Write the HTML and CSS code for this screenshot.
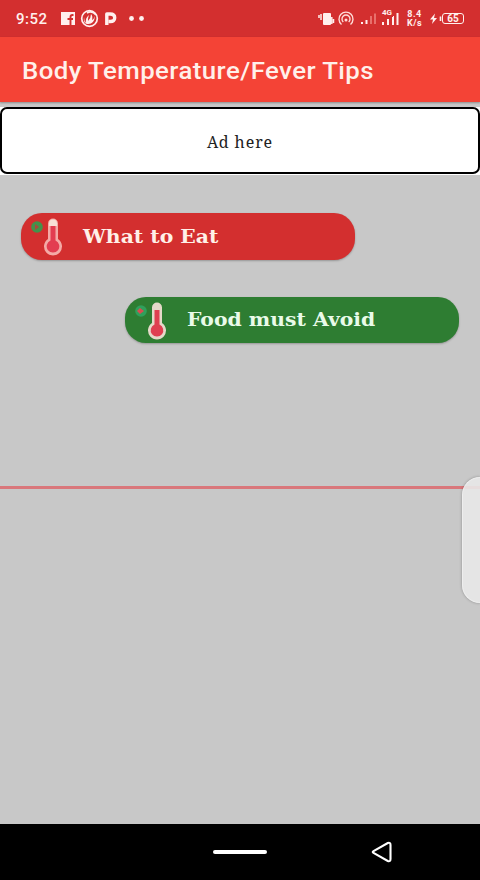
FILE: index.html
```html
<!DOCTYPE html>
<html lang="en">
<head>
    <meta charset="UTF-8">
    <meta name="viewport" content="width=device-width, initial-scale=1.0">
    <title>Body Temperature/Fever Tips</title>
    <link rel="stylesheet" href="styles.css">
</head>
<body>

    <div class="status-bar">
        <span class="clock">9:52</span>
        <svg class="notifications" width="90" height="20" viewBox="0 0 90 20">
            <rect x="1" y="3" width="14" height="13" fill="#fff0ee"/>
            <path d="M13.500 6h-1q-2 0-2 2V16M7.500 10h5.500" fill="none" stroke="#d32f2f" stroke-width="1.900"/>
            <circle cx="29.500" cy="9.500" r="7.800" fill="none" stroke="#fff0ee" stroke-width="1.700"/>
            <path d="M24 8q-1 6 3 7 7 1 8-8-1 3-3 4 1-4-1-6 0 4-3 7 0-4 1-6-4 3-3 8-2-2-2-6z" fill="#fff0ee"/>
            <path d="M27 4q5-3 9 2" fill="none" stroke="#fff0ee" stroke-width="1.500"/>
            <path d="M46.800 16V5h3.400q4.500 0 4.500 3.800t-4.500 3.700h-1.500" fill="none" stroke="#fff0ee" stroke-width="3.400" stroke-linejoin="round"/>
            <circle cx="71.500" cy="9.500" r="2.400" fill="#fff0ee"/>
            <circle cx="81.500" cy="9.500" r="2.400" fill="#fff0ee"/>
        </svg>
        <div class="status-right">
            <svg width="43" height="20" viewBox="0 0 43 20">
                <rect x="6" y="4" width="8" height="12" rx="1" fill="#fff0ee"/>
                <path d="M4 5v6M2 6v3M14.800 8v7M16.500 10v4" stroke="#fff0ee" stroke-width="1.500"/>
                <g fill="none" stroke="#ffdcd8" stroke-width="1.400">
                    <path d="M24.500 15.500a7 7 0 1 1 9 0"/>
                    <path d="M26.300 13a4 4 0 1 1 5.400 0"/>
                </g>
                <circle cx="29" cy="11" r="1.500" fill="#ffdcd8"/>
            </svg>
            <svg width="18" height="20" viewBox="0 0 18 20">
                <path d="M1 13h2v2H1zM5.500 11h2v4h-2z" fill="#fff0ee"/>
                <path d="M10 7h2v8h-2zM14 4.500h2V15h-2z" fill="#e8706c"/>
            </svg>
            <div class="mobile-signal">
                <span>4G</span>
                <svg width="17" height="12" viewBox="0 0 17 12">
                    <path d="M0 9h2v3H0zM5 6h2v6H5zM10 3h2v9h-2zM14.500 0h2v12h-2z" fill="#fff0ee"/>
                </svg>
            </div>
            <div class="net-speed">
                <span>8.4</span>
                <span>K/s</span>
            </div>
            <svg width="12" height="20" viewBox="0 0 12 20">
                <path d="M5 4.500L0 10.500h3L2 15l5-6H4z" fill="#fff0ee"/>
                <path d="M10.500 7.500v4.500" stroke="#fff0ee" stroke-width="1.600"/>
            </svg>
            <span class="battery">65</span>
        </div>
    </div>

    <div class="app-bar">
        <h1>Body Temperature/Fever Tips</h1>
    </div>

    <div class="content">
        <div class="ad-wrap">
            <div class="ad-box">Ad here</div>
        </div>

        <div class="menu">
            <a class="tip-button eat">
                <svg width="36" height="42" viewBox="1 0 36 42">
                    <circle cx="8" cy="12" r="5.800" fill="#43924b"/>
                    <path d="M6 9l4 3-4 3z" fill="#a94a3c"/>
                    <path d="M19 8.500a5 5 0 0 1 10 0V24a9 9 0 1 1-10 0z" fill="#f4aaa6"/>
                    <path d="M20 8.500a4 4 0 0 1 8 0V11h-8z" fill="#f8e0d6"/>
                    <path d="M21.500 11h5v14.500a6.300 6.300 0 1 1-5 0z" fill="#e33d50"/>
                </svg>
                <span>What to Eat</span>
            </a>
            <a class="tip-button avoid">
                <svg width="36" height="42" viewBox="1 0 36 42">
                    <circle cx="8" cy="12" r="5.800" fill="#30a05b"/>
                    <path d="M4 12l3-3 4 3-4 3z" fill="#da4c50"/>
                    <path d="M19 8.500a5 5 0 0 1 10 0V24a9 9 0 1 1-10 0z" fill="#e5d9c9"/>
                    <path d="M21.500 11h5v14.500a6.300 6.300 0 1 1-5 0z" fill="#df3f50"/>
                </svg>
                <span>Food must Avoid</span>
            </a>
        </div>

        <hr class="divider">
        <div class="edge-panel"></div>
    </div>

    <div class="nav-bar">
        <span class="home-pill"></span>
        <svg class="back" width="24" height="24" viewBox="0 0 24 24">
            <path d="M3.500 11.200L17.800 3q2.700-1 2.700 2v14q0 3-2.700 2L3.500 12.800q-1.500-.8 0-1.600z" fill="none" stroke="#fff" stroke-width="2.100"/>
        </svg>
    </div>

</body>
</html>
```
FILE: styles.css
```css
* {
    box-sizing: border-box;
}

body {
    margin: 0;
    height: 880px;
    display: flex;
    flex-direction: column;
    background-color: #c8c8c8;
    font-family: Roboto, Arial, sans-serif;
    overflow: hidden;
}

svg {
    display: block;
    flex: none;
}

.status-bar {
    height: 37px;
    flex: none;
    display: flex;
    align-items: center;
    padding: 0 16px;
    background-color: #d32f2f;
    color: #fff0ee;
}

.clock {
    width: 44px;
    font-size: 15px;
    font-weight: 500;
    letter-spacing: 0.5px;
}

.status-right {
    display: flex;
    align-items: center;
    margin-left: auto;
}

.mobile-signal {
    width: 18px;
    height: 19px;
    margin-left: 4px;
    position: relative;
    display: flex;
    align-items: flex-end;
    padding-bottom: 3px;
}

.mobile-signal span {
    position: absolute;
    left: 0;
    top: -1px;
    padding-right: 1px;
    background-color: #d32f2f;
    font-size: 8px;
    line-height: 9px;
    font-weight: 700;
}

.net-speed {
    width: 17px;
    margin: 1px 7px 0 6px;
    display: flex;
    flex-direction: column;
    align-items: center;
    font-size: 9px;
    line-height: 9.5px;
    font-weight: 700;
    letter-spacing: 0.5px;
}

.battery {
    width: 22px;
    height: 11px;
    border: 1px solid #fff0ee;
    border-radius: 3px;
    font-size: 10px;
    line-height: 9.5px;
    font-weight: 700;
    text-align: center;
}

.app-bar {
    height: 65px;
    flex: none;
    display: flex;
    align-items: center;
    padding: 2px 22px 0;
    background-color: #f44336;
    box-shadow: 0 1px 2px rgba(0, 0, 0, 0.3);
    z-index: 1;
}

h1 {
    margin: 0;
    color: #fff0ea;
    font-size: 24px;
    font-weight: 500;
    letter-spacing: 0.4px;
    white-space: nowrap;
    transform: scaleX(1.075);
    transform-origin: left;
}

.content {
    flex: 1;
    position: relative;
    padding-top: 5px;
}

.ad-wrap {
    height: 68px;
    background-color: #fff;
}

.ad-box {
    height: 67px;
    display: flex;
    align-items: center;
    justify-content: center;
    padding-top: 3px;
    border: 2.5px solid #000;
    border-radius: 7px;
    color: #222;
    font-family: "Noto Serif", "DejaVu Serif Condensed", "DejaVu Serif", serif;
    font-stretch: condensed;
    font-size: 16px;
    letter-spacing: 0.9px;
}

.menu {
    display: flex;
    flex-direction: column;
    gap: 37px;
    padding: 38px 21px 0;
}

.tip-button {
    width: 334px;
    height: 46.5px;
    display: flex;
    align-items: center;
    gap: 17px;
    padding-left: 9px;
    border-radius: 21px;
    box-shadow: 0 1px 2px rgba(0, 0, 0, 0.25);
    color: #fff0e8;
    font-family: Rockwell, "DejaVu Serif", serif;
    font-size: 18px;
    font-weight: 700;
    white-space: nowrap;
}

.tip-button span {
    transform: scaleX(1.13);
    transform-origin: left;
}

.eat {
    background-color: #d32f2f;
}

.avoid {
    align-self: flex-end;
    background-color: #2e7d32;
    color: #e9fbe9;
}

.divider {
    height: 3px;
    margin: 143px 0 0;
    border: none;
    background-color: #d9777b;
}

.edge-panel {
    position: absolute;
    right: 0;
    top: 375px;
    width: 18px;
    height: 126px;
    border-radius: 18px 0 0 18px;
    border: 1px solid #eee;
    border-right: none;
    background-color: rgba(232, 232, 232, 0.9);
    box-shadow: 0 0 3px rgba(0, 0, 0, 0.3);
}

.nav-bar {
    height: 56px;
    flex: none;
    display: grid;
    grid-template-columns: 213px 54px 1fr;
    align-items: center;
    background-color: #000;
}

.home-pill {
    grid-column: 2;
    height: 4px;
    border-radius: 2px;
    background-color: #fff;
}

.back {
    margin-left: 103px;
}
```
